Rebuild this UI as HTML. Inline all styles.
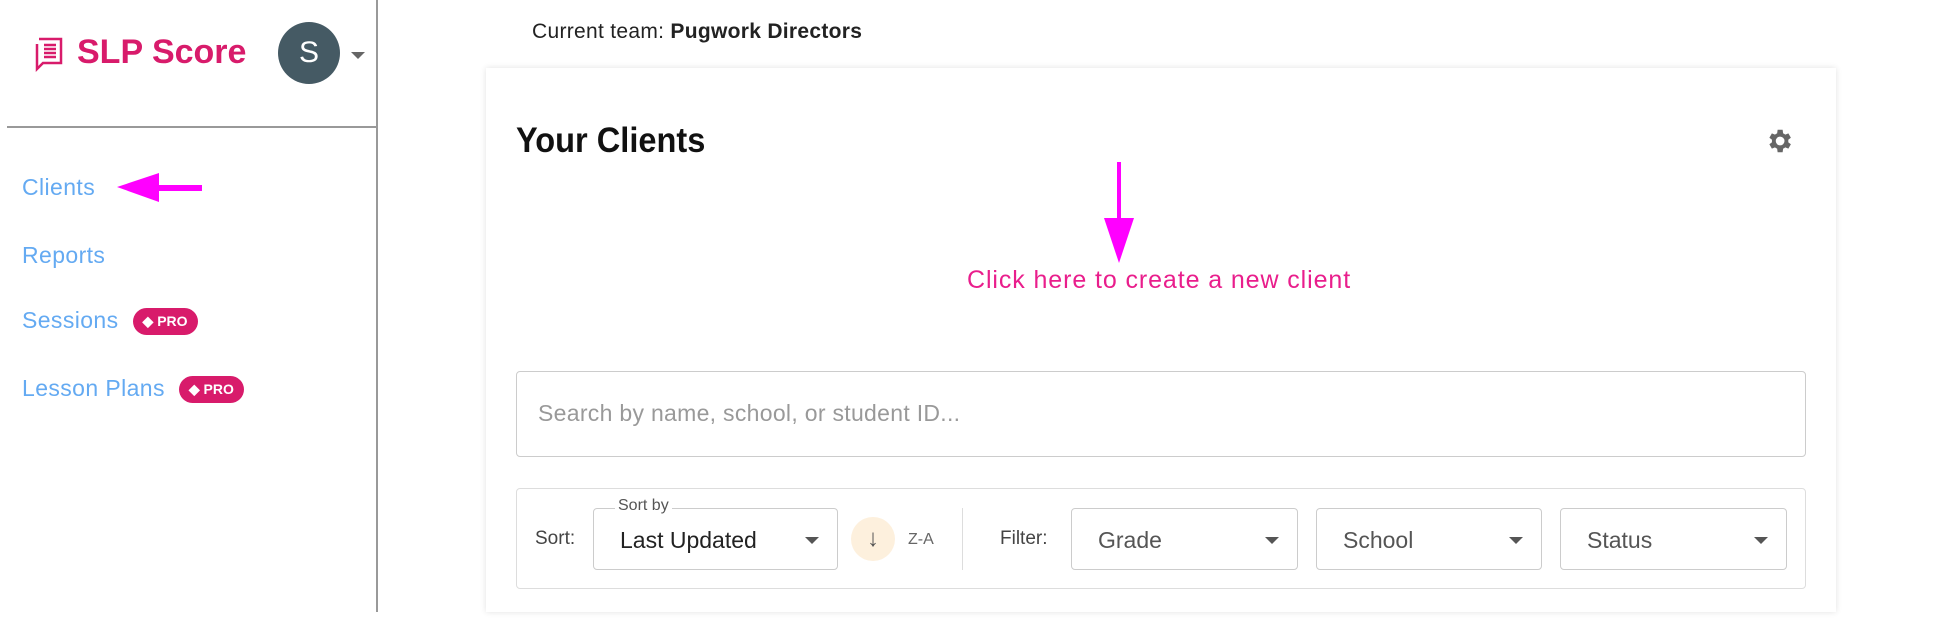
<!DOCTYPE html>
<html><head><meta charset="utf-8"><style>
*{box-sizing:border-box;margin:0;padding:0}
body{width:1958px;height:640px;background:#fff;font-family:"Liberation Sans",Arial,sans-serif;position:relative;overflow:hidden}
.a{position:absolute}
.nav{position:absolute;left:22px;color:#64aaf2;font-size:23px;letter-spacing:0.4px}
.pro{display:inline-block;background:#d81b6b;color:#fff;font-size:14px;font-weight:bold;border-radius:14px;padding:5px 10px;vertical-align:middle;margin-left:14px;letter-spacing:0}
.sel{position:absolute;top:508px;height:62px;border:1px solid #ccc;border-radius:4px;font-size:23px;color:#555;padding:18px 0 0 26px}
.sel:after{content:"";position:absolute;right:18px;top:28px;border-left:7px solid transparent;border-right:7px solid transparent;border-top:7px solid #555}
</style></head><body>
<svg class="a" style="left:34px;top:36px" width="32" height="36" viewBox="0 0 32 36"><path d="M5 3h22v24H9l-6 6V8" fill="none" stroke="#d81b6b" stroke-width="2.5"/><path d="M10 9h12M10 13h12M10 17h12M10 21h12" stroke="#d81b6b" stroke-width="2.5"/></svg>
<div class="a" style="left:77px;top:33px;font-size:34px;font-weight:bold;color:#d81b6b">SLP Score</div>
<div class="a" style="left:278px;top:22px;width:62px;height:62px;border-radius:50%;background:#455a64;color:#fff;font-size:30px;text-align:center;line-height:62px">S</div>
<div class="a" style="left:351px;top:52px;border-left:7px solid transparent;border-right:7px solid transparent;border-top:7px solid #666"></div>
<div class="a" style="left:7px;top:126px;width:370px;height:2px;background:#999"></div>
<div class="a" style="left:376px;top:0;width:2px;height:612px;background:#999"></div>
<div class="nav" style="top:174px">Clients</div>
<svg class="a" style="left:114px;top:171px" width="92" height="34"><polygon points="3,16 45,2 45,14 88,14 88,20 45,20 45,31" fill="#f0f"/></svg>
<div class="nav" style="top:242px">Reports</div>
<div class="nav" style="top:307px">Sessions<span class="pro">◆ PRO</span></div>
<div class="nav" style="top:375px">Lesson Plans<span class="pro">◆ PRO</span></div>
<div class="a" style="left:532px;top:20px;font-size:21px;color:#222;letter-spacing:0.3px">Current team: <b>Pugwork Directors</b></div>
<div class="a" style="left:486px;top:68px;width:1350px;height:544px;box-shadow:0 0 6px rgba(0,0,0,.12);background:#fff"></div>
<div class="a" style="left:516px;top:121px;font-size:35px;color:#111;font-weight:bold;transform:scaleX(0.93);transform-origin:left">Your Clients</div>
<svg class="a" style="left:1764px;top:126px" width="30" height="30" viewBox="0 0 24 24"><path fill="#666" d="M19.4 13a7.5 7.5 0 000-2l2.1-1.6-2-3.5-2.5 1a7.3 7.3 0 00-1.7-1L14.9 3h-4l-.4 2.9a7.3 7.3 0 00-1.7 1l-2.5-1-2 3.5L6.4 11a7.5 7.5 0 000 2l-2.1 1.6 2 3.5 2.5-1a7.3 7.3 0 001.7 1l.4 2.9h4l.4-2.9a7.3 7.3 0 001.7-1l2.5 1 2-3.5zM12.9 15.5a3.5 3.5 0 110-7 3.5 3.5 0 010 7z"/></svg>
<svg class="a" style="left:1102px;top:162px" width="34" height="102"><rect x="15" y="0" width="4" height="60" fill="#f0f"/><polygon points="2,56 32,56 17,101" fill="#f0f"/></svg>
<div class="a" style="left:967px;top:266px;font-size:25px;letter-spacing:0.9px;color:#e91e8c">Click here to create a new client</div>
<div class="a" style="left:516px;top:371px;width:1290px;height:86px;border:1px solid #ccc;border-radius:4px;font-size:23px;letter-spacing:0.3px;color:#999;padding:28px 0 0 21px">Search by name, school, or student ID...</div>
<div class="a" style="left:516px;top:488px;width:1290px;height:101px;border:1px solid #ddd;border-radius:4px"></div>
<div class="a" style="left:535px;top:528px;font-size:19px;color:#444">Sort:</div>
<div class="sel" style="left:593px;width:245px;color:#222">Last Updated</div>
<div class="a" style="left:615px;top:497px;font-size:16px;color:#555;background:#fff;padding:0 3px">Sort by</div>
<div class="a" style="left:851px;top:517px;width:44px;height:44px;border-radius:50%;background:#fdf0dd;color:#555;font-size:24px;text-align:center;line-height:44px">↓</div>
<div class="a" style="left:908px;top:531px;font-size:16px;color:#666">Z-A</div>
<div class="a" style="left:962px;top:508px;width:1px;height:62px;background:#ddd"></div>
<div class="a" style="left:1000px;top:528px;font-size:19px;color:#444">Filter:</div>
<div class="sel" style="left:1071px;width:227px">Grade</div>
<div class="sel" style="left:1316px;width:226px">School</div>
<div class="sel" style="left:1560px;width:227px">Status</div>
</body></html>
